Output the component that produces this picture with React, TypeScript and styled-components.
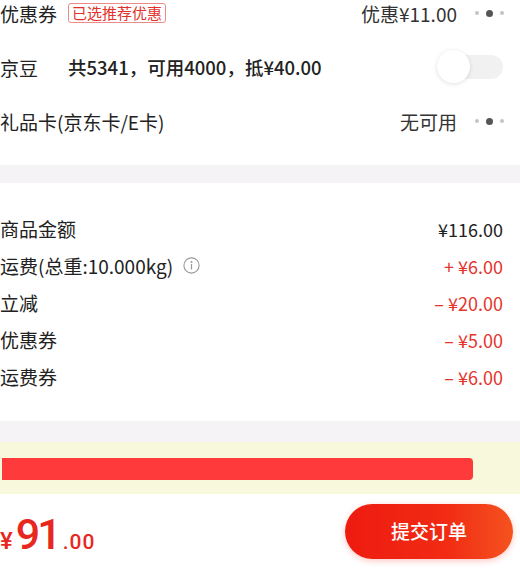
import styled, { createGlobalStyle } from 'styled-components';

const GlobalStyle = createGlobalStyle`
  html, body {
    margin: 0;
    padding: 0;
    background: #fff;
    font-family: "Noto Sans CJK SC", "Noto Sans", sans-serif;
    color: #222;
    overflow: hidden;
  }
`;

const Page = styled.div`
  width: 520px;
  height: 580px;
  display: flex;
  flex-direction: column;
  background: #f5f3f6;
  overflow: hidden;
`;

const Card = styled.section<{ $top?: number }>`
  background: #fff;
  display: flex;
  flex-direction: column;
  margin-top: ${p => p.$top ?? 0}px;
`;

const OptionList = styled(Card)`
  padding: 0 16px 17px 0;
`;

const OptionRow = styled.div`
  height: 54px;
  display: flex;
  align-items: center;
  font-size: 19px;
`;

const Label = styled.span`
  color: #222;
  white-space: nowrap;
  font-size: 19px;
`;

const Tag = styled.span`
  margin-left: 11px;
  height: 20px;
  padding: 0 3px;
  border: 1px solid #eb8a86;
  border-radius: 3px;
  color: #e2302a;
  font-size: 15px;
  line-height: 18px;
  box-sizing: border-box;
`;

const BeanInfo = styled.span`
  margin-left: 30px;
  font-size: 18.5px;
  font-weight: 500;
  color: #222;
`;

const Spacer = styled.div`
  flex: 1;
`;

const Value = styled.span`
  color: #333;
  white-space: nowrap;
`;

const Dots = styled.span`
  display: flex;
  align-items: center;
  gap: 7px;
  margin-left: 18px;
`;

const Dot = styled.i<{ $big?: boolean }>`
  display: block;
  width: ${p => (p.$big ? 7 : 4)}px;
  height: ${p => (p.$big ? 7 : 4)}px;
  border-radius: 50%;
  background: ${p => (p.$big ? '#555' : '#c4c4c4')};
`;

const Switch = styled.span`
  position: relative;
  width: 66px;
  height: 24px;
  border-radius: 12px;
  background: #f1f1f1;
  margin-right: 1px;
`;

const Knob = styled.span`
  position: absolute;
  left: 0;
  top: -5px;
  width: 33px;
  height: 33px;
  border-radius: 50%;
  background: #fff;
  box-shadow: 0 1px 5px rgba(0, 0, 0, 0.12);
`;

const Summary = styled(Card)`
  padding: 27px 17px 26px 0;
`;

const SumRow = styled.div`
  height: 37px;
  display: flex;
  align-items: center;
  justify-content: space-between;
`;

const LabelGroup = styled.span`
  display: flex;
  align-items: center;
  gap: 10px;
`;

const Amount = styled.span<{ $red?: boolean }>`
  color: ${p => (p.$red ? '#e5342c' : '#222')};
  font-size: 18px;
  white-space: pre;
`;

const Notice = styled.div`
  margin-top: 21px;
  height: 52px;
  background: #f8f8dd;
  display: flex;
  align-items: center;
`;

const Redacted = styled.div`
  margin: 2px 0 0 2px;
  width: 471px;
  height: 22px;
  background: #ff3a3a;
  border-radius: 0 4px 4px 0;
`;

const Footer = styled.footer`
  flex: 1;
  background: #fff;
  display: flex;
  align-items: flex-start;
  justify-content: space-between;
  padding: 10px 7px 0 0;
`;

const Price = styled.div`
  display: flex;
  align-items: baseline;
  color: #e8281f;
  font-family: Roboto, "Noto Sans", sans-serif;
  margin-top: 5px;
`;

const Yen = styled.span`
  font-size: 24px;
  font-weight: 500;
`;

const Big = styled.span`
  font-size: 43px;
  font-weight: 500;
  letter-spacing: -3px;
  margin-left: 3px;
`;

const Cents = styled.span`
  font-size: 21px;
  font-weight: 500;
  letter-spacing: 1px;
  margin-left: 4px;
`;

const SubmitButton = styled.button`
  width: 168px;
  height: 55px;
  border: none;
  border-radius: 28px;
  background: linear-gradient(90deg, #ee1b10 0%, #f12b14 60%, #f5531f 100%);
  box-shadow: 0 2px 6px rgba(240, 40, 20, 0.25);
  color: #fff;
  font-family: "Noto Sans CJK SC", sans-serif;
  font-size: 19px;
  font-weight: 500;
  padding: 0 0 2px 0;
`;

const InfoIcon = () => (
  <svg width="17" height="17" viewBox="0 0 17 17">
    <circle cx="8.5" cy="8.5" r="7.6" fill="none" stroke="#999" strokeWidth="1.1" />
    <circle cx="8.5" cy="5" r="1" fill="#999" />
    <rect x="7.9" y="7" width="1.2" height="5.5" fill="#999" />
  </svg>
);

const More = () => (
  <Dots>
    <Dot />
    <Dot $big />
    <Dot />
  </Dots>
);

const summary = [
  { label: '商品金额', amount: '¥116.00' },
  { label: '运费(总重:10.000kg)', amount: '+ ¥6.00', red: true, info: true },
  { label: '立减', amount: '– ¥20.00', red: true },
  { label: '优惠券', amount: '– ¥5.00', red: true },
  { label: '运费券', amount: '– ¥6.00', red: true },
];

export default function App() {
  return (
    <>
      <GlobalStyle />
      <Page>
        <OptionList $top={-14}>
          <OptionRow>
            <Label>优惠券</Label>
            <Tag>已选推荐优惠</Tag>
            <Spacer />
            <Value>优惠¥11.00</Value>
            <More />
          </OptionRow>
          <OptionRow>
            <Label>京豆</Label>
            <BeanInfo>共5341，可用4000，抵¥40.00</BeanInfo>
            <Spacer />
            <Switch>
              <Knob />
            </Switch>
          </OptionRow>
          <OptionRow>
            <Label>礼品卡(京东卡/E卡)</Label>
            <Spacer />
            <Value>无可用</Value>
            <More />
          </OptionRow>
        </OptionList>

        <Summary $top={18}>
          {summary.map(item => (
            <SumRow key={item.label}>
              <LabelGroup>
                <Label>{item.label}</Label>
                {item.info && <InfoIcon />}
              </LabelGroup>
              <Amount $red={item.red}>{item.amount}</Amount>
            </SumRow>
          ))}
        </Summary>

        <Notice>
          <Redacted />
        </Notice>

        <Footer>
          <Price>
            <Yen>¥</Yen>
            <Big>91</Big>
            <Cents>.00</Cents>
          </Price>
          <SubmitButton>提交订单</SubmitButton>
        </Footer>
      </Page>
    </>
  );
}
